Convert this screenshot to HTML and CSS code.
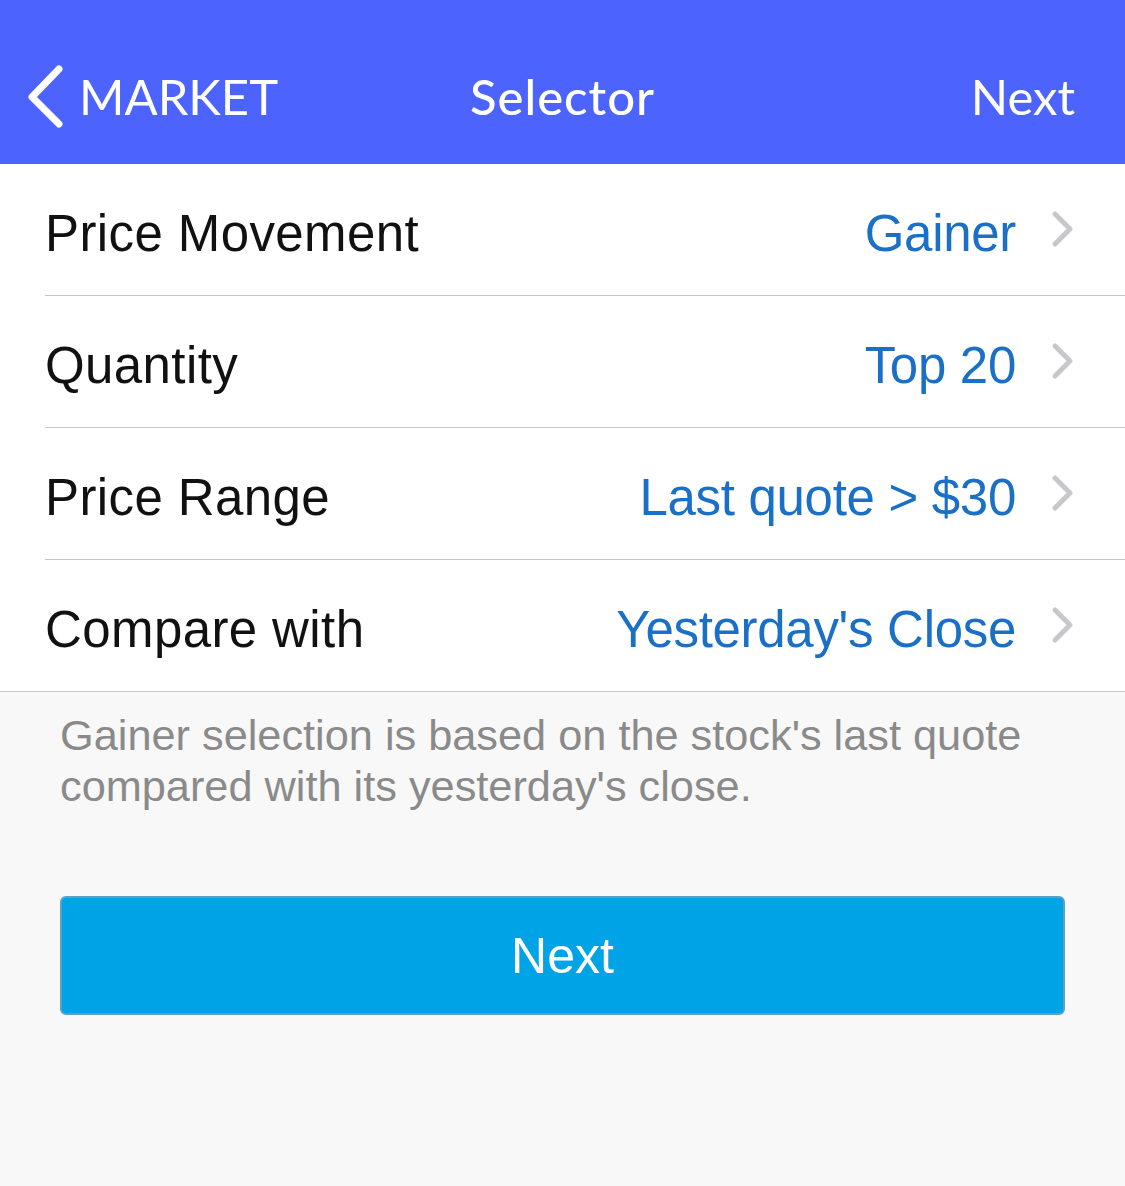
FILE: index.html
```html
<!DOCTYPE html>
<html lang="en">
<head>
    <meta charset="UTF-8"/>
    <meta name="viewport" content="width=device-width, initial-scale=1.0"/>
    <title>Selector</title>
    <link rel="stylesheet" href="styles.css">
</head>
<body>
<div id="app">
    <div class="nav-bar">
        <div class="nav-left">
            <svg class="back-icon" width="40" height="64" viewBox="0 0 40 64">
                <path d="M34 5 L7 33 L34 60" fill="none" stroke="#fff" stroke-width="7" stroke-linecap="round" stroke-linejoin="round"/>
            </svg>
            <span>MARKET</span>
        </div>
        <div class="nav-title">Selector</div>
        <div class="nav-right">Next</div>
    </div>

    <div class="list">
        <div class="row">
            <div class="label">Price Movement</div>
            <div class="value">Gainer</div>
            <svg class="chevron" width="24" height="38" viewBox="0 0 24 38">
                <path d="M4 4 L19 19 L4 34" fill="none" stroke="#c7c7cc" stroke-width="5" stroke-linecap="round" stroke-linejoin="round"/>
            </svg>
        </div>
        <div class="row">
            <div class="label">Quantity</div>
            <div class="value">Top 20</div>
            <svg class="chevron" width="24" height="38" viewBox="0 0 24 38">
                <path d="M4 4 L19 19 L4 34" fill="none" stroke="#c7c7cc" stroke-width="5" stroke-linecap="round" stroke-linejoin="round"/>
            </svg>
        </div>
        <div class="row">
            <div class="label">Price Range</div>
            <div class="value">Last quote &gt; $30</div>
            <svg class="chevron" width="24" height="38" viewBox="0 0 24 38">
                <path d="M4 4 L19 19 L4 34" fill="none" stroke="#c7c7cc" stroke-width="5" stroke-linecap="round" stroke-linejoin="round"/>
            </svg>
        </div>
        <div class="row last">
            <div class="label">Compare with</div>
            <div class="value">Yesterday's Close</div>
            <svg class="chevron" width="24" height="38" viewBox="0 0 24 38">
                <path d="M4 4 L19 19 L4 34" fill="none" stroke="#c7c7cc" stroke-width="5" stroke-linecap="round" stroke-linejoin="round"/>
            </svg>
        </div>
    </div>

    <p class="note">Gainer selection is based on the stock's last quote compared with its yesterday's close.</p>

    <div class="actions">
        <button class="next-button">Next</button>
    </div>
</div>
</body>
</html>
```

FILE: styles.css
```css
body {
    margin: 0;
    padding: 0;
    font-family: "Liberation Sans", Arial, sans-serif;
    background-color: #f8f8f8;
}

#app {
    min-height: 100vh;
    background-color: #f8f8f8;
}

.nav-bar {
    box-sizing: border-box;
    height: 164px;
    background-color: #4d63fe;
    color: #fff;
    display: grid;
    grid-template-columns: 1fr auto 1fr;
    align-items: center;
    padding: 28px 50px 0;
    font-family: Lato, "Open Sans", sans-serif;
    font-size: 49px;
}

.nav-left {
    display: flex;
    align-items: center;
    gap: 14px;
    margin-left: -25px;
}

.back-icon {
    display: block;
}

.nav-title {
    font-weight: 500;
    letter-spacing: 1px;
}

.nav-right {
    justify-self: end;
}

.list {
    background-color: #fff;
    border-bottom: 1px solid #c8c8c8;
}

.row {
    height: 131px;
    margin-left: 45px;
    padding-right: 50px;
    display: flex;
    align-items: center;
    border-bottom: 1px solid #c8c8c8;
    font-size: 51px;
}

.row.last {
    border-bottom: none;
}

.label {
    flex: 1;
    color: #111;
    padding-top: 7px;
    letter-spacing: 0.4px;
}

.value {
    color: #1a6fc6;
    padding-top: 7px;
    letter-spacing: -0.3px;
}

.chevron {
    display: block;
    margin-left: 35px;
    margin-top: -2px;
}

.note {
    margin: 0;
    padding: 18px 60px 0;
    color: #8a8a8a;
    font-size: 43.3px;
    line-height: 51px;
}

.actions {
    padding: 84px 60px 0;
}

.next-button {
    display: block;
    width: 100%;
    height: 119px;
    background-color: #00a3e6;
    border: 2px solid #5aa0c8;
    border-radius: 6px;
    color: #fff;
    font-family: "Liberation Sans", Arial, sans-serif;
    font-size: 50px;
}
```
